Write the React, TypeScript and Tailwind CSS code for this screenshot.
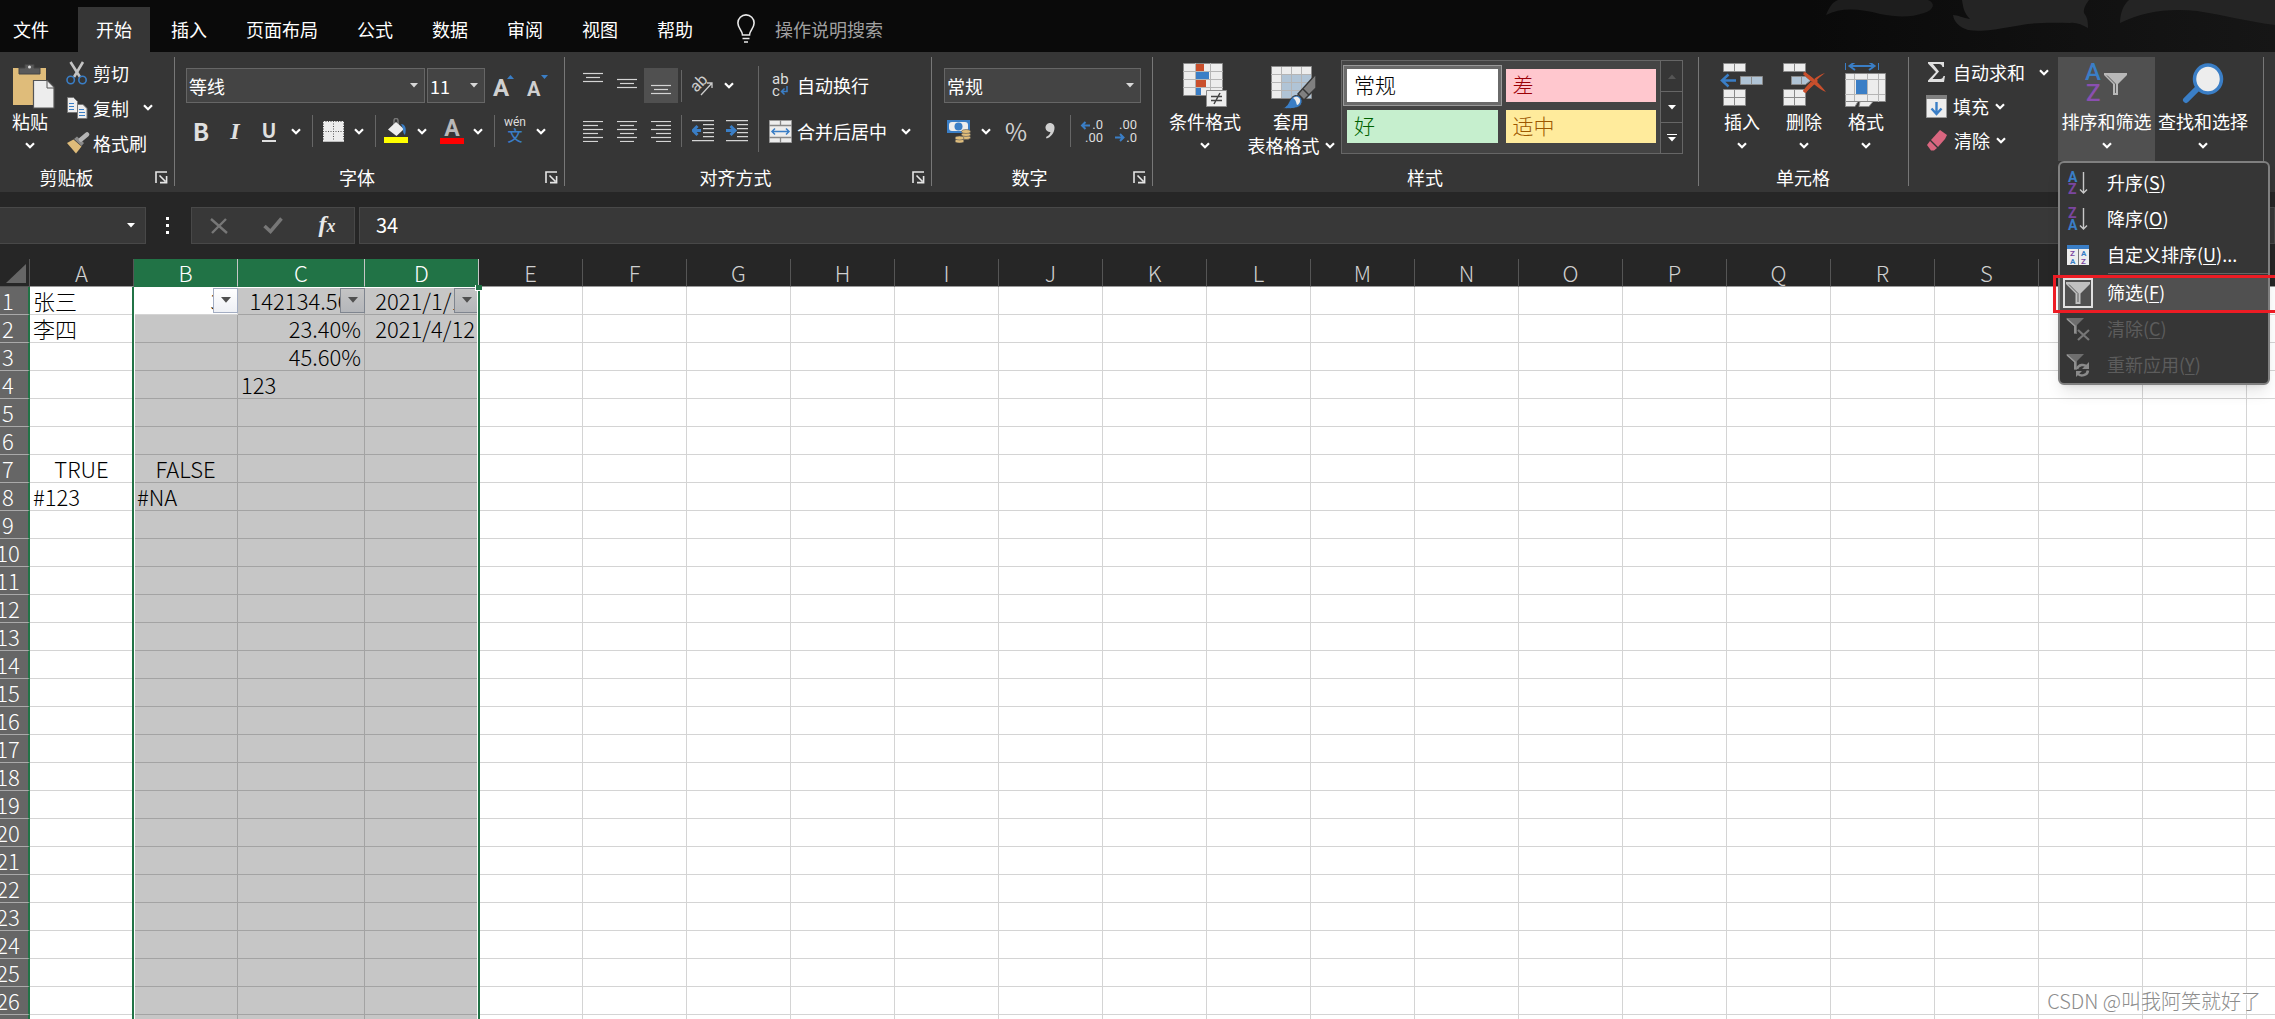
import type { ReactNode } from "react";
import { useState } from "react";
import clsx from "clsx";

const TABS = ["插入", "页面布局", "公式", "数据", "审阅", "视图", "帮助"];

const COLUMNS = "ABCDEFGHIJKLMNOPQRSTUV".split("");
const SELECTED = ["B", "C", "D"];

type Cell = { text: string; align?: "left" | "center" | "right"; filter?: boolean };

const CELLS: Record<string, Cell> = {
  A1: { text: "张三" },
  A2: { text: "李四" },
  A7: { text: "TRUE", align: "center" },
  A8: { text: "#123" },
  B1: { text: "34", align: "right", filter: true },
  B7: { text: "FALSE", align: "center" },
  B8: { text: "#NA" },
  C1: { text: "142134.566", align: "right", filter: true },
  C2: { text: "23.40%", align: "right" },
  C3: { text: "45.60%", align: "right" },
  C4: { text: "123" },
  D1: { text: "2021/1/12", align: "right", filter: true },
  D2: { text: "2021/4/12", align: "right" },
};

/* ---------- small shared pieces ---------- */

function Chevron() {
  return (
    <svg width="10" height="7" viewBox="0 0 10 7" fill="none" className="shrink-0">
      <path d="M1 1.2 5 5.2 9 1.2" stroke="#fff" strokeWidth="2.2" />
    </svg>
  );
}

function Triangle({ className = "w-2 fill-[#d8d8d8]" }: { className?: string }) {
  return (
    <svg viewBox="0 0 8 5" className={className}>
      <path d="M0 0h8L4 4.6z" />
    </svg>
  );
}

function Drop({ label }: { label: string }) {
  return (
    <button type="button" aria-label={label} className="w-5 h-8 flex items-center justify-center">
      <Chevron />
    </button>
  );
}

function Tool({
  label,
  active,
  className = "w-[34px]",
  children,
}: {
  label: string;
  active?: boolean;
  className?: string;
  children: ReactNode;
}) {
  return (
    <button
      type="button"
      aria-label={label}
      className={clsx("self-stretch flex items-center justify-center", className, active && "bg-[#505050]")}
    >
      {children}
    </button>
  );
}

function Sep() {
  return <span className="ml-[6px] mr-1 w-px h-8 bg-[#666]" />;
}

function Group({
  label,
  labelClass,
  launcher,
  className,
  children,
}: {
  label?: string;
  labelClass?: string;
  launcher?: boolean;
  className?: string;
  children: ReactNode;
}) {
  return (
    <section className={clsx("shrink-0 h-[129px] flex flex-col border-r border-[#777]", className)}>
      <div className="flex-1 flex items-start">{children}</div>
      <div className="h-[18px] flex items-center pr-px">
        <span className={clsx("flex-1 text-center leading-4", labelClass)}>{label}</span>
        {launcher && (
          <button type="button" aria-label={`${label}设置`} className="w-6 flex justify-center">
            <svg width="13" height="13" viewBox="0 0 13 13" fill="none" stroke="#e6e6e6" strokeWidth="1.6">
              <path d="M1 12V1h11M4.5 4.5l6 6M11.6 5v6.6H5" />
            </svg>
          </button>
        )}
      </div>
    </section>
  );
}

function BigButton({
  icon,
  lines,
  className,
}: {
  icon: ReactNode;
  lines: string[];
  className?: string;
}) {
  return (
    <button type="button" className={clsx("pt-[6px] pb-1 flex flex-col items-center leading-6", className)}>
      <span className="h-[46px]">{icon}</span>
      <span>{lines[0]}</span>
      <span className="h-6 flex items-center gap-[5px] whitespace-nowrap">
        {lines[1]}
        <Chevron />
      </span>
    </button>
  );
}

function Select({ label, value, className }: { label: string; value: string; className?: string }) {
  return (
    <div className={clsx("relative h-[35px]", className)}>
      <select
        aria-label={label}
        className="appearance-none w-full h-full pl-[2px] bg-[#444] border border-[#666] text-white text-lg outline-none"
      >
        <option>{value}</option>
      </select>
      <span className="absolute right-[7px] top-[15px] pointer-events-none">
        <Triangle />
      </span>
    </div>
  );
}

/* ---------- icons ---------- */

function Bulb() {
  return (
    <svg width="18" height="30" viewBox="0 0 18 30" fill="none" stroke="#e8e8e8" strokeWidth="1.6">
      <path d="M5.5 21c0-4.500-4.600-6.500-4.600-12A8.100 8.100 0 0 1 17.100 9c0 5.500-4.600 7.500-4.600 12zM5.500 24.500h7M7 28h4" />
    </svg>
  );
}

function PasteIcon() {
  return (
    <svg width="42" height="46" viewBox="0 0 42 46" className="ml-2">
      <path fill="#dfbc7a" d="M0 5h33v37H0z" />
      <path fill="#5a5a5a" stroke="#444" d="M6 5h6V1.500h9V5h6v6H6z" />
      <circle cx="16.500" cy="4" r="1.500" fill="#ddd" />
      <path fill="#ededed" stroke="#555" strokeWidth="1.200" d="M20.500 17.500h14l6.500 6.500v21H20.500z" />
      <path fill="none" stroke="#555" d="M34 18v7h7" />
    </svg>
  );
}

function CutIcon() {
  return (
    <svg width="22" height="24" viewBox="0 0 22 24" fill="none">
      <path stroke="#c4c4c4" strokeWidth="2.600" d="M4.500 1 14 16M17 1 8 16" />
      <circle cx="4.700" cy="19" r="3.700" stroke="#3a7ec6" strokeWidth="1.600" />
      <circle cx="16.500" cy="19" r="3.700" stroke="#3a7ec6" strokeWidth="1.600" />
    </svg>
  );
}

function CopyIcon() {
  return (
    <svg width="22" height="24" viewBox="0 0 22 24">
      <path fill="#ededed" stroke="#777" d="M1.500 1.500h6l4 4v11h-10z" />
      <path stroke="#3a7ec6" d="M3 7.500h5M3 10.500h5M3 13.500h5" />
      <path fill="#ededed" stroke="#777" d="M11.500 8.500h5.500l4 4v10h-9.500z" />
      <path stroke="#3a7ec6" d="M13 13.500h5M13 16.500h6M13 19.500h6" />
    </svg>
  );
}

function BrushIcon() {
  return (
    <svg width="24" height="22" viewBox="0 0 24 22">
      <path fill="#dfbc7a" d="m1 11 6.500-3.500 8 7L10 21.500z" />
      <path fill="#8a8a8a" d="m8 7 3-2.500 7 6.500-2.500 3z" />
      <path stroke="#b5b5b5" strokeWidth="4.500" strokeLinecap="round" d="m15 7.500 6-5" />
    </svg>
  );
}

function FontSizeIcon({ grow }: { grow?: boolean }) {
  return (
    <svg width="22" height="24" viewBox="0 0 22 24" className="overflow-visible">
      <text x="0" y="22" fontFamily="Roboto" fontWeight="700" fontSize={grow ? 24 : 20} fill="#d0d0d0">
        A
      </text>
      <path fill="#3a7ec6" d={grow ? "M14 5h7l-3.500-4z" : "M14 1h7l-3.500 4z"} />
    </svg>
  );
}

function BorderIcon() {
  return (
    <svg width="21" height="21" viewBox="0 0 21 21">
      <path fill="#ededed" d="M0 0h21v21H0z" />
      <path stroke="#555" strokeDasharray="1 1.500" d="M0 .5h21M.5 0v19M20.500 0v19M0 10.500h21M10.500 0v19" />
      <path stroke="#bbb" d="M0 20.500h21" />
    </svg>
  );
}

function FillIcon() {
  return (
    <svg width="24" height="26" viewBox="0 0 24 26">
      <path fill="none" stroke="#777" strokeWidth="1.500" d="M10 8V2.500a2 2 0 0 1 4 0V9" />
      <path fill="#ededed" d="M12 4 20 11l-7.500 7L4 11.500z" />
      <path fill="#3a7ec6" d="M17 6c4 0 6 4 4 11-1-1-2-2-2-5 0-2-1-4-2-6z" />
      <path fill="#ffff00" d="M0 19h24v6H0z" />
    </svg>
  );
}

function FontColorIcon() {
  return (
    <svg width="24" height="28" viewBox="0 0 24 28" className="overflow-visible">
      <text x="12" y="19" textAnchor="middle" fontFamily="Roboto" fontWeight="700" fontSize="23" fill="#b8b8b8">
        A
      </text>
      <path fill="#f00" d="M0 21h24v6H0z" />
    </svg>
  );
}

function PhoneticIcon() {
  return (
    <svg width="24" height="30" viewBox="0 0 24 30" textAnchor="middle" className="overflow-visible">
      <text x="12" y="10" fontFamily="Roboto" fontSize="12" fill="#ddd">
        wén
      </text>
      <text x="12" y="25" fontFamily="Noto Sans CJK SC" fontSize="15" fontWeight="500" fill="#3a7ec6">
        文
      </text>
    </svg>
  );
}

function Lines({ rows, height }: { rows: number[][]; height: number }) {
  return (
    <svg width="20" height={height} viewBox={`0 0 20 ${height}`} stroke="#d4d4d4" strokeWidth="1.200">
      {rows.map(([y, x1, x2]) => (
        <path key={y} d={`M${x1} ${y + 0.5}H${x2}`} />
      ))}
    </svg>
  );
}

const TOP = [[5, 0, 20], [9, 3, 17], [13, 0, 20]];
const MIDDLE = [[11, 0, 20], [15, 3, 17], [19, 0, 20]];
const BOTTOM = [[17, 0, 20], [21, 3, 17], [25, 0, 20]];
const LEFT = [[0, 0, 20], [4, 0, 15], [8, 0, 20], [12, 0, 15], [16, 0, 20], [20, 0, 15]];
const CENTER = [[0, 0, 20], [4, 3, 17], [8, 0, 20], [12, 3, 17], [16, 0, 20], [20, 3, 17]];
const RIGHT = [[0, 0, 20], [4, 5, 20], [8, 0, 20], [12, 5, 20], [16, 0, 20], [20, 5, 20]];

function OrientationIcon() {
  return (
    <svg width="22" height="22" viewBox="0 0 22 22" fill="none" className="overflow-visible">
      <text x="0" y="14" transform="rotate(-45 7 11)" fontFamily="Roboto" fontSize="16" fill="#ccc">
        ab
      </text>
      <path stroke="#ccc" strokeWidth="1.300" d="m9 20 11-12M15 8h5v5" />
    </svg>
  );
}

function IndentIcon({ increase }: { increase?: boolean }) {
  return (
    <svg width="22" height="22" viewBox="0 0 22 22" fill="none">
      <path stroke="#d4d4d4" strokeWidth="1.200" d="M0 .6h22M11 4.600h11M11 8.600h11M11 12.600h11M11 16.600h11M0 20.600h22" />
      <path
        stroke="#3a7ec6"
        strokeWidth="3"
        d={increase ? "M0 10.500h8M4.500 6 9 10.500 4.500 15" : "M9 10.500H1.500M5.500 6 1 10.500 5.500 15"}
      />
    </svg>
  );
}

function WrapIcon() {
  return (
    <svg width="18" height="26" viewBox="0 0 18 26" fill="none" fontFamily="Roboto" className="overflow-visible">
      <text x="0" y="12" fontSize="15" fill="#ddd">
        ab
      </text>
      <text x="0" y="24" fontSize="15" fill="#ddd">
        c
      </text>
      <path stroke="#3a7ec6" strokeWidth="1.500" d="M15 14v5.500h-5M12.500 16.500l-3 3 3 3" />
    </svg>
  );
}

function MergeIcon() {
  return (
    <svg width="23" height="23" viewBox="0 0 23 23" fill="none">
      <path fill="#ededed" stroke="#999" d="M.5.5h22v22H.5z" />
      <path stroke="#888" strokeWidth="1.300" d="M0 5.500h23M0 17.500h23M11.500 0v5.500M11.500 17.500V23" />
      <path stroke="#3a7ec6" strokeWidth="1.500" d="M3 11.500h17M6 8.500l-3 3 3 3M17 8.500l3 3-3 3" />
    </svg>
  );
}

function MoneyIcon() {
  return (
    <svg width="24" height="24" viewBox="0 0 24 24">
      <path fill="#3a7ec6" d="M0 1h23v13H0z" />
      <rect x="2" y="3" width="19" height="9" rx="3" fill="#ededed" />
      <circle cx="11.500" cy="7.500" r="4" fill="#3a7ec6" />
      <g fill="#dfbc7a" stroke="#555" strokeWidth=".6">
        <ellipse cx="19" cy="18.500" rx="4.500" ry="2" />
        <ellipse cx="19" cy="15.500" rx="4.500" ry="2" />
        <ellipse cx="19" cy="12.500" rx="4.500" ry="2" />
        <ellipse cx="12.500" cy="22" rx="4.500" ry="2" />
        <ellipse cx="12.500" cy="19" rx="4.500" ry="2" />
      </g>
    </svg>
  );
}

function DecimalIcon({ decrease }: { decrease?: boolean }) {
  return (
    <svg
      width="24"
      height="24"
      viewBox="0 0 24 24"
      fill="none"
      fontFamily="Roboto"
      textAnchor="end"
      className="overflow-visible"
    >
      <text x="23" y="10" fontSize="13" fill="#ddd">
        {decrease ? ".00" : ".0"}
      </text>
      <text x="23" y="23" fontSize="13" fill="#ddd">
        {decrease ? ".0" : ".00"}
      </text>
      <path
        stroke="#3a7ec6"
        strokeWidth="2"
        d={decrease ? "M1 18.500h8M6 15l3.500 3.500L6 22" : "M10 6.500H2M5.500 3 2 6.500 5.500 10"}
      />
    </svg>
  );
}

function CondFormatIcon() {
  return (
    <svg width="44" height="46" viewBox="0 0 44 46">
      <path fill="#ededed" stroke="#8a8a8a" d="M.5.5h39v32H.5z" />
      <path fill="#c94f2c" d="M13 1h8v7h-8zM13 17h10v7H13z" />
      <path fill="#3a7ec6" d="M13 9h13v7H13zM13 25h5v7h-5z" />
      <path stroke="#b5b5b5" d="M0 8.500h40M0 16.500h40M0 24.500h40M12.500 0v32M27.500 0v32" />
      <path fill="#ededed" stroke="#8a8a8a" d="M23.500 27.500h20v16h-20z" />
      <path stroke="#444" strokeWidth="1.500" d="M28 33.500h11M28 37.500h11M37 30l-6 11" />
    </svg>
  );
}

function TableFormatIcon() {
  return (
    <svg width="46" height="46" viewBox="0 0 46 46" className="ml-1">
      <path fill="#ededed" stroke="#8a8a8a" d="M1.500 3.500h40v32h-40z" />
      <path fill="#b0c4d6" d="M12 12h29v23H12z" />
      <path stroke="#b5b5b5" d="M1 11.500h40M1 19.500h40M1 27.500h40M11.500 4v31M21.500 4v31M31.500 4v31" />
      <path fill="#808080" stroke="#383838" strokeWidth="1.500" d="M46 11v14L34 37l-6-6z" />
      <path stroke="#383838" strokeWidth="1.500" d="m33 26 6 6" />
      <path fill="#3a7ec6" stroke="#383838" d="M12 45.500c7-2 6-8 11-12 5-3 10 1 9 6-1 5-7 7-20 6z" />
      <path fill="#ededed" d="M23 35c4-3 8 0 7 4-1 2-2 3-3 3-1-3-1-5-4-7z" />
    </svg>
  );
}

function InsertIcon() {
  return (
    <svg width="44" height="46" viewBox="0 0 44 46" fill="none">
      <path fill="#ededed" stroke="#8a8a8a" d="M3.500.5h22v8h-22zM3.500 26.500h22v16h-22z" />
      <path stroke="#8a8a8a" d="M14.500 0v9M14.500 26v17M3 34.500h23" />
      <path fill="#b0c4d6" stroke="#8a8a8a" d="M20.500 13.500h22v8h-22zM31.500 13.500v8" />
      <path stroke="#3a7ec6" strokeWidth="2.500" d="M16 17.500H2M8.500 11.500 2 17.500l6.500 6" />
    </svg>
  );
}

function DeleteIcon() {
  return (
    <svg width="44" height="46" viewBox="0 0 44 46" fill="none">
      <path fill="#ededed" stroke="#8a8a8a" d="M1.500.5h22v8h-22zM1.500 26.500h22v16h-22z" />
      <path stroke="#8a8a8a" d="M12.500 0v9M12.500 26v17M1 34.500h23" />
      <path fill="#b0c4d6" stroke="#8a8a8a" d="M9.500 13.500h14l5 4-5 4h-14zM19.500 13.500v8" />
      <path fill="#c94f2c" d="M21 9c8 3 17 12 23 20-7-3-17-11-23-20zM43 10c-7 2-16 9-22 18l3 2c5-8 11-14 19-20z" />
      <path stroke="#c94f2c" strokeWidth="3" d="M22 10 34 20M35 17 22 29" />
    </svg>
  );
}

function FormatIcon() {
  return (
    <svg width="42" height="46" viewBox="0 0 42 46" fill="none">
      <path stroke="#3a7ec6" d="M.5-1v8M33.500-1v8" />
      <path stroke="#3a7ec6" strokeWidth="2" d="M5 3h24M10-1 4.500 3 10 7M24-1l5.500 4L24 7" />
      <path fill="#ededed" stroke="#8a8a8a" d="M.5 10.500h40v28H.5z" />
      <path stroke="#b5b5b5" d="M0 16.500h40M0 31.500h40M9.500 11v28M22.500 11v28M33.500 11v28" />
      <path fill="#3a7ec6" d="M11 17h11v14H11z" />
      <path fill="#ededed" stroke="#8a8a8a" d="M.5 38.500H13l-3 5H.5zM15 38.500h13l-4 5H14z" />
    </svg>
  );
}

function FillDownIcon() {
  return (
    <svg width="21" height="23" viewBox="0 0 21 23" fill="none">
      <path fill="#ededed" stroke="#999" d="M.5.5h20v22H.5z" />
      <path fill="#808080" d="M0 0h21v4H0z" />
      <path stroke="#3a7ec6" strokeWidth="2.400" d="M10.500 7v12M5.500 13.500l5 5.500 5-5.500" />
    </svg>
  );
}

function EraserIcon() {
  return (
    <svg width="22" height="22" viewBox="0 0 22 22">
      <path fill="#d9667f" d="m14 1 7 5-2 4-7 8-7-7z" />
      <path fill="#d9667f" d="m4 12 7 7-3 2.500H5L1 16z" />
    </svg>
  );
}

function Funnel() {
  return (
    <svg width="24" height="24" viewBox="0 0 24 24">
      <path fill="#c0c0c0" d="M0 1h24v2l-9.500 9.500V23h-5V12.500L0 3z" />
      <path fill="none" stroke="#5a5a5a" d="m3 3.500 9 9V21" />
    </svg>
  );
}

function SortFilterIcon() {
  return (
    <svg width="44" height="46" viewBox="0 0 44 46" className="overflow-visible">
      <g fontFamily="Roboto" fontWeight="500" fontSize="24">
        <text x="0" y="17" fill="#3a7ec6">
          A
        </text>
        <text x="1" y="38" fill="#8a4fb0">
          Z
        </text>
      </g>
      <path fill="#b8b8b8" d="M19 10h23v2l-9 9v11h-5V21l-9-9z" />
      <path fill="none" stroke="#5a5a5a" d="m22 12.500 8.500 8.500v9" />
    </svg>
  );
}

function FindIcon() {
  return (
    <svg width="42" height="46" viewBox="0 0 42 46">
      <path stroke="#3a7ec6" strokeWidth="6" strokeLinecap="round" d="M4 37 16 25" />
      <ellipse cx="26" cy="16" rx="13.500" ry="14" fill="#ededed" stroke="#3a7ec6" strokeWidth="3.500" />
    </svg>
  );
}

function SortIcon({ desc }: { desc?: boolean }) {
  return (
    <svg width="20" height="24" viewBox="0 0 20 24" fill="none" className="overflow-visible">
      <g fontFamily="Roboto" fontWeight="700" fontSize="14">
        <text x="0" y="11" fill={desc ? "#7b46a0" : "#3a7ec6"}>
          {desc ? "Z" : "A"}
        </text>
        <text x="0" y="23" fill={desc ? "#3a7ec6" : "#7b46a0"}>
          {desc ? "A" : "Z"}
        </text>
      </g>
      <path stroke="#c8c8c8" strokeWidth="1.400" d="M15.500 1v21M12 18.500l3.500 3.500 3.500-3.500" />
    </svg>
  );
}

function CustomSortIcon() {
  return (
    <svg width="22" height="20" viewBox="0 0 22 20" className="overflow-visible">
      <path fill="#ededed" d="M0 0h22v20H0z" />
      <path fill="#3a7ec6" d="M0 0h22v4H0z" />
      <path stroke="#777" d="M11.500 4v16" />
      <g fontFamily="Roboto" fontWeight="700" fontSize="8">
        <text x="3" y="11" fill="#7b46a0">Z</text>
        <text x="3" y="19" fill="#3a7ec6">A</text>
        <text x="14" y="11" fill="#3a7ec6">A</text>
        <text x="14" y="19" fill="#7b46a0">Z</text>
      </g>
    </svg>
  );
}

function ClearFilterIcon() {
  return (
    <svg width="24" height="24" viewBox="0 0 24 24" fill="none">
      <path fill="#6e6e6e" d="M0 1h18l-7 7v9H8V9z" />
      <path stroke="#999" strokeWidth="1.500" d="m1 2 8 7v7" />
      <path stroke="#777" strokeWidth="2.200" d="m12 13 11 10M23 13 12 23" />
    </svg>
  );
}

function ReapplyIcon() {
  return (
    <svg width="24" height="24" viewBox="0 0 24 24" fill="none">
      <path fill="#6e6e6e" d="M0 1h18l-7 7v9H8V9z" />
      <path stroke="#999" strokeWidth="1.500" d="m1 2 8 7v7" />
      <path stroke="#8a8a8a" strokeWidth="2.500" d="M11 16a6 5.500 0 0 1 10.500-2M22 17.500a6 5.500 0 0 1-10.500 3" />
      <path fill="#8a8a8a" d="M23 9v7h-7zM10 24v-6h6z" />
    </svg>
  );
}

/* ---------- sort & filter menu ---------- */

const MENU = [
  { text: "升序", accel: "S", icon: <SortIcon /> },
  { text: "降序", accel: "O", icon: <SortIcon desc /> },
  { text: "自定义排序", accel: "U", tail: "...", icon: <CustomSortIcon /> },
  { text: "筛选", accel: "F", icon: <Funnel />, active: true },
  { text: "清除", accel: "C", icon: <ClearFilterIcon />, disabled: true },
  { text: "重新应用", accel: "Y", icon: <ReapplyIcon />, disabled: true },
];

function SortMenu() {
  return (
    <div className="absolute left-0 top-full z-20 w-[212px] pt-[2px] rounded-md border-2 border-[#808080] bg-[#363636] shadow-lg">
      {MENU.map((item) => (
        <div key={item.text}>
          {item.active && <div className="ml-12 mb-px h-px bg-[#666]" />}
          <div className={clsx("relative", item.active && "bg-[#505050]")}>
            <button
              type="button"
              disabled={item.disabled}
              className={clsx(
                "w-full h-9 pl-[3px] flex items-center gap-[14px] whitespace-nowrap",
                item.disabled ? "text-[#5c5c5c]" : "text-white"
              )}
            >
              <span
                className={clsx(
                  "w-[30px] h-[30px] flex items-center justify-center",
                  item.active && "border-2 border-[#e0e0e0]"
                )}
              >
                {item.icon}
              </span>
              <span className="pb-[2px]">
                {item.text}(<u className="underline-offset-2">{item.accel}</u>){item.tail}
              </span>
            </button>
            {item.active && (
              <div className="absolute -left-[7px] top-0 w-[230px] h-[38px] border-[3px] border-[#ed1c24] pointer-events-none" />
            )}
          </div>
        </div>
      ))}
    </div>
  );
}

/* ---------- ribbon ---------- */

function TitleArt() {
  return (
    <svg width="465" height="52" viewBox="0 0 465 52" className="absolute right-0 top-0">
      <defs>
        <linearGradient id="haze" x1="0" x2="1">
          <stop offset="0" stopColor="#0a0a0a" />
          <stop offset="1" stopColor="#161616" />
        </linearGradient>
      </defs>
      <path fill="url(#haze)" d="M0 0h465v52H0z" />
      <path fill="#1d1d1d" d="M16 15C19 8 22 2 28 0h90c8 3 6 10-4 13-14 5-28 4-44 1C50 9 32 7 16 15z" />
      <path
        fill="#242424"
        d="M143 15c5 0 10 3 17 4-6-6-7-12-8-19h127c-2 3-6 8-5 13 4 5 4 10 4 15-6-3-12-6-18-5-24-1-42 0-60 4-18 3-30 5-42 3-9-3-14-8-15-15z"
      />
      <path fill="#242424" d="M310 23c0-9 3-18 9-23h146v25c-26-3-50-10-78-14-30-3-54 1-77 12z" />
    </svg>
  );
}

function TabBar() {
  return (
    <header className="relative h-[52px] bg-[#0a0a0a]">
      <TitleArt />
      <nav className="relative h-full pt-[7px] flex text-white">
        <button type="button" className="pl-[13px] pr-[29px] pb-[2px]">
          文件
        </button>
        <button type="button" className="px-[18px] pb-[2px] bg-[#363636]">
          开始
        </button>
        {TABS.map((tab) => (
          <button type="button" key={tab} className="ml-[3px] px-[18px] pb-[2px]">
            {tab}
          </button>
        ))}
        <label className="ml-[26px] pb-[2px] flex items-center gap-5">
          <Bulb />
          <input
            aria-label="操作说明搜索"
            placeholder="操作说明搜索"
            className="w-60 bg-transparent outline-none placeholder:text-[#a0a0a0]"
          />
        </label>
      </nav>
    </header>
  );
}

function ClipboardGroup() {
  return (
    <Group label="剪贴板" labelClass="pr-4" launcher className="w-[175px]">
      <BigButton icon={<PasteIcon />} lines={["粘贴"]} className="w-[60px]" />
      <div className="-mt-[2px] pl-[6px]">
        <button type="button" className="h-[35px] flex items-center gap-[5px]">
          <CutIcon /> 剪切
        </button>
        <div className="flex items-center gap-[9px]">
          <button type="button" className="h-[35px] flex items-center gap-[5px]">
            <CopyIcon /> 复制
          </button>
          <Drop label="复制选项" />
        </div>
        <button type="button" className="h-[35px] flex items-center gap-[3px]">
          <BrushIcon /> 格式刷
        </button>
      </div>
    </Group>
  );
}

function FontGroup() {
  return (
    <Group label="字体" launcher className="w-[390px]">
      <div className="pt-[11px] pl-[9px]">
        <div className="h-[35px] pl-[2px] flex items-center">
          <Select label="字体" value="等线" className="w-[239px] mr-[2px]" />
          <Select label="字号" value="11" className="w-[58px] mr-[2px]" />
          <Tool label="增大字号">
            <FontSizeIcon grow />
          </Tool>
          <Tool label="减小字号">
            <FontSizeIcon />
          </Tool>
        </div>
        <div className="mt-3 h-8 flex items-center text-[#e0e0e0] text-2xl leading-none">
          <Tool label="加粗">
            <b>B</b>
          </Tool>
          <Tool label="倾斜">
            <i className="font-['Liberation_Serif',serif] font-bold">I</i>
          </Tool>
          <Tool label="下划线">
            <b className="border-b-2 border-[#e0e0e0] leading-5 text-xl">U</b>
          </Tool>
          <Drop label="下划线选项" />
          <Sep />
          <Tool label="边框" className="w-8">
            <BorderIcon />
          </Tool>
          <Drop label="边框选项" />
          <Sep />
          <Tool label="填充颜色" className="w-8">
            <FillIcon />
          </Tool>
          <Drop label="填充颜色选项" />
          <Tool label="字体颜色" className="w-8 ml-1">
            <FontColorIcon />
          </Tool>
          <Drop label="字体颜色选项" />
          <Sep />
          <Tool label="拼音" className="w-8">
            <PhoneticIcon />
          </Tool>
          <Drop label="拼音选项" />
        </div>
      </div>
    </Group>
  );
}

function AlignGroup() {
  return (
    <Group label="对齐方式" launcher className="w-[367px]">
      <div className="pt-[11px] pl-[11px] w-[193px]">
        <div className="h-[35px] flex items-center">
          <Tool label="顶端对齐">
            <Lines rows={TOP} height={35} />
          </Tool>
          <Tool label="垂直居中">
            <Lines rows={MIDDLE} height={35} />
          </Tool>
          <Tool label="底端对齐" active>
            <Lines rows={BOTTOM} height={35} />
          </Tool>
          <span className="ml-[3px] mr-1 w-px h-8 bg-[#666]" />
          <Tool label="方向" className="flex-1 gap-[10px]">
            <OrientationIcon />
            <Chevron />
          </Tool>
          <span className="w-[18px]" />
        </div>
        <div className="mt-3 h-8 flex items-center">
          <Tool label="左对齐">
            <Lines rows={LEFT} height={21} />
          </Tool>
          <Tool label="居中">
            <Lines rows={CENTER} height={21} />
          </Tool>
          <Tool label="右对齐">
            <Lines rows={RIGHT} height={21} />
          </Tool>
          <span className="ml-[3px] mr-1 w-px h-8 bg-[#666]" />
          <Tool label="减少缩进">
            <IndentIcon />
          </Tool>
          <Tool label="增加缩进">
            <IndentIcon increase />
          </Tool>
        </div>
      </div>
      <span className="mt-[9px] w-px h-[86px] bg-[#666]" />
      <div className="pt-[11px] pl-[10px]">
        <button type="button" className="h-[35px] pb-[2px] flex items-center gap-1">
          <span className="w-6 flex justify-center">
            <WrapIcon />
          </span>
          自动换行
        </button>
        <div className="mt-3 h-8 flex items-center gap-[9px]">
          <button type="button" className="flex items-center gap-1">
            <span className="w-6">
              <MergeIcon />
            </span>
            合并后居中
          </button>
          <Drop label="合并选项" />
        </div>
      </div>
    </Group>
  );
}

function NumberGroup() {
  return (
    <Group label="数字" launcher className="w-[221px]">
      <div className="pt-[11px] pl-[10px]">
        <Select label="数字格式" value="常规" className="ml-[2px] w-[197px]" />
        <div className="mt-3 h-8 flex items-center text-[#d0d0d0]">
          <Tool label="会计格式">
            <MoneyIcon />
          </Tool>
          <Drop label="会计格式选项" />
          <Tool label="百分比" className="w-10 text-2xl leading-none">
            %
          </Tool>
          <Tool label="千位分隔" className="w-7">
            <svg width="10" height="16" viewBox="0 0 10 16" fill="#d0d0d0">
              <path d="M4.500 0a4.500 4.500 0 0 1 5 5c0 5-4 9.500-8 10.500l-.5-1.500c2.500-1 4-3 4.500-5A4.500 4.500 0 1 1 4.500 0z" />
            </svg>
          </Tool>
          <Sep />
          <Tool label="增加小数位数">
            <DecimalIcon />
          </Tool>
          <Tool label="减少小数位数">
            <DecimalIcon decrease />
          </Tool>
        </div>
      </div>
    </Group>
  );
}

const STYLES = [
  { name: "常规", className: "bg-white text-black", selected: true },
  { name: "差", className: "bg-[#ffc7ce] text-[#9c0006]" },
  { name: "好", className: "bg-[#c6efce] text-[#006100]" },
  { name: "适中", className: "bg-[#ffeb9c] text-[#9c5700]" },
];

function StylesGroup() {
  return (
    <Group label="样式" className="w-[546px]">
      <BigButton icon={<CondFormatIcon />} lines={["条件格式"]} className="ml-3 w-20" />
      <BigButton icon={<TableFormatIcon />} lines={["套用", "表格格式"]} className="w-[92px]" />
      <div className="mt-[3px] ml-1 h-[94px] flex border border-[#666] bg-[#444]">
        <div className="w-[318px] pt-1 pl-px grid grid-cols-2 content-start">
          {STYLES.map((s) => (
            <button
              type="button"
              key={s.name}
              className={clsx(
                "h-[41px] p-[3px] border",
                s.selected ? "border-[#999] bg-[#6a6a6a]" : "border-transparent"
              )}
            >
              <span className={clsx("h-full pl-[7px] pb-[2px] flex items-center text-[21px] font-light", s.className)}>
                {s.name}
              </span>
            </button>
          ))}
        </div>
        <div className="w-[22px] flex flex-col divide-y divide-[#666] border-l border-[#666] bg-[#363636]">
          <button type="button" aria-label="上一行" className="flex-1 flex items-center justify-center">
            <Triangle className="w-2 rotate-180 fill-[#555]" />
          </button>
          <button type="button" aria-label="下一行" className="flex-1 flex items-center justify-center">
            <Triangle className="w-2 fill-white" />
          </button>
          <button type="button" aria-label="其他" className="flex-1 flex flex-col items-center justify-center gap-[2px]">
            <span className="w-[10px] h-px bg-white" />
            <Triangle className="w-2 fill-white" />
          </button>
        </div>
      </div>
    </Group>
  );
}

function CellsGroup() {
  return (
    <Group label="单元格" className="w-[210px]">
      <div className="pl-3 flex">
        <BigButton icon={<InsertIcon />} lines={["插入"]} className="w-[62px]" />
        <BigButton icon={<DeleteIcon />} lines={["删除"]} className="w-[62px]" />
        <BigButton icon={<FormatIcon />} lines={["格式"]} className="w-[62px]" />
      </div>
    </Group>
  );
}

function EditingGroup() {
  const [open, setOpen] = useState(true);
  return (
    <Group className="w-[355px]">
      <div className="-mt-[2px] pl-[17px] w-[149px] whitespace-nowrap">
        <button type="button" className="h-[34px] flex items-center gap-[6px]">
          <svg width="21" height="20" viewBox="0 0 21 20" fill="#e0e0e0">
            <path d="M2 0h16v5h-1.500C16 3 15 2 13 2H7l6 7.500L6.500 17H14c2 0 3-1 3.500-3H19l-1 6H2v-1.500l8-8.500L2 1.500z" />
          </svg>
          自动求和
          <span className="ml-2">
            <Chevron />
          </span>
        </button>
        <button type="button" className="h-[34px] flex items-center gap-[6px]">
          <FillDownIcon /> 填充 <Chevron />
        </button>
        <button type="button" className="h-[34px] flex items-center gap-[6px]">
          <EraserIcon /> 清除 <Chevron />
        </button>
      </div>
      <div className="relative" onClick={() => setOpen(!open)}>
        <BigButton icon={<SortFilterIcon />} lines={["排序和筛选"]} className="w-[97px] bg-[#505050]" />
        {open && <SortMenu />}
      </div>
      <BigButton icon={<FindIcon />} lines={["查找和选择"]} className="w-24" />
    </Group>
  );
}

function FormulaBar() {
  return (
    <div className="py-[15px] flex bg-[#262626]">
      <div className="w-[146px] h-[37px] flex items-center border border-l-0 border-[#484848] bg-[#383838]">
        <input aria-label="名称框" className="min-w-0 flex-1 bg-transparent outline-none" />
        <button type="button" aria-label="名称列表" className="w-7 flex justify-center">
          <Triangle className="w-2 fill-white" />
        </button>
      </div>
      <div className="w-[43px] flex flex-col items-center justify-center gap-1">
        <i className="size-[3px] bg-white" />
        <i className="size-[3px] bg-white" />
        <i className="size-[3px] bg-white" />
      </div>
      <div className="ml-[2px] mr-1 w-[164px] h-[37px] flex items-center border border-[#484848] bg-[#383838]">
        <button type="button" aria-label="取消" className="flex-1 flex justify-center">
          <svg width="18" height="16" viewBox="0 0 18 16" stroke="#777" strokeWidth="2.400">
            <path d="M1 1 17 15M16 1 2 15" />
          </svg>
        </button>
        <button type="button" aria-label="输入" className="flex-1 flex justify-center">
          <svg width="20" height="17" viewBox="0 0 20 17" fill="none" stroke="#777" strokeWidth="3.500">
            <path d="m1.500 9 6 5.500L18.500 1.500" />
          </svg>
        </button>
        <button
          type="button"
          aria-label="插入函数"
          className="flex-1 font-['Liberation_Serif',serif] italic font-bold text-2xl leading-none text-[#e8e8e8]"
        >
          f<span className="text-lg">x</span>
        </button>
      </div>
      <input
        aria-label="编辑栏"
        defaultValue="34"
        className="min-w-0 flex-1 h-[37px] pl-4 pb-[2px] border border-[#484848] bg-[#383838] text-xl text-white outline-none"
      />
    </div>
  );
}

/* ---------- sheet ---------- */

function columnWidth(col: string) {
  if (col === "C") return "w-[127px]";
  if (col === "D") return "w-[114px]";
  return "w-[104px]";
}

function FilterButton({ col }: { col: string }) {
  return (
    <button
      type="button"
      aria-label={`筛选 ${col}`}
      className={clsx(
        "absolute -right-px top-px w-[25px] h-[25px] flex items-center justify-center border",
        col === "B"
          ? "border-[#a3adc2] bg-linear-to-b from-white to-[#eef0f5]"
          : "border-[#7f858f] bg-linear-to-b from-[#c4c4c4] to-[#b4b6ba]"
      )}
    >
      <Triangle className="w-[10px] fill-[#505050]" />
    </button>
  );
}

function Sheet() {
  return (
    <main className="relative flex-1 min-h-0 overflow-hidden bg-white">
      <table className="table-fixed w-max border-separate border-spacing-0 text-[22px] leading-[27px] font-light">
        <colgroup>
          <col className="w-[30px]" />
          {COLUMNS.map((c) => (
            <col key={c} className={columnWidth(c)} />
          ))}
        </colgroup>
        <thead>
          <tr className="h-7 bg-[#262626] text-[#d0d0d0]">
            <th className="p-0 border-r border-b border-[#555]">
              <svg width="29" height="27" viewBox="0 0 29 27" fill="#666" className="block">
                <path d="M26 5v19H6z" />
              </svg>
            </th>
            {COLUMNS.map((c) => (
              <th
                key={c}
                scope="col"
                className={clsx(
                  "p-0 border-r border-b font-light",
                  SELECTED.includes(c)
                    ? "bg-[#217346] border-r-[#c6c6c6] border-b-[#217346] text-white"
                    : "border-r-[#555] border-b-[#999]"
                )}
              >
                {c}
              </th>
            ))}
          </tr>
        </thead>
        <tbody>
          {Array.from({ length: 27 }, (_, i) => i + 1).map((row) => (
            <tr key={row} className="h-7">
              <th
                scope="row"
                className="p-0 border-r-2 border-b border-r-[#217346] border-b-[#aaa] bg-[#666] font-light text-white"
              >
                <span className="w-4 flex justify-center">{row}</span>
              </th>
              {COLUMNS.map((c) => {
                const cell = CELLS[`${c}${row}`];
                const selected = SELECTED.includes(c) && !(c === "B" && row === 1);
                return (
                  <td
                    key={c}
                    className={clsx(
                      "relative p-0 px-[3px] border-r border-b text-black whitespace-nowrap",
                      selected ? "bg-[#c6c6c6] border-[#a3a3a3]" : "border-[#d4d4d4]",
                      cell?.align === "center" && "text-center",
                      cell?.align === "right" && "text-right"
                    )}
                  >
                    {cell?.text}
                    {cell?.filter && <FilterButton col={c} />}
                  </td>
                );
              })}
            </tr>
          ))}
        </tbody>
      </table>
      {/* selection frame around B:D */}
      <div className="absolute left-[132px] top-7 bottom-0 w-[348px] border-x-2 border-[#217346] pointer-events-none">
        <div className="h-full border-x border-t border-white" />
        <span className="absolute -right-1 -top-[2px] w-[7px] h-[6px] border-l border-b border-white bg-[#217346]" />
      </div>
      <div className="absolute right-[14px] bottom-1 text-xl font-light text-[#8c8c8c] [text-shadow:1px_1px_0_#fff]">
        CSDN @叫我阿笑就好了
      </div>
    </main>
  );
}

export default function App() {
  return (
    <div className="h-screen flex flex-col overflow-hidden bg-[#262626] font-['Noto_Sans_CJK_SC',sans-serif] text-lg">
      <TabBar />
      <div className="relative z-10 h-[140px] pt-[5px] flex bg-[#363636] text-white">
        <ClipboardGroup />
        <FontGroup />
        <AlignGroup />
        <NumberGroup />
        <StylesGroup />
        <CellsGroup />
        <EditingGroup />
      </div>
      <FormulaBar />
      <Sheet />
    </div>
  );
}
